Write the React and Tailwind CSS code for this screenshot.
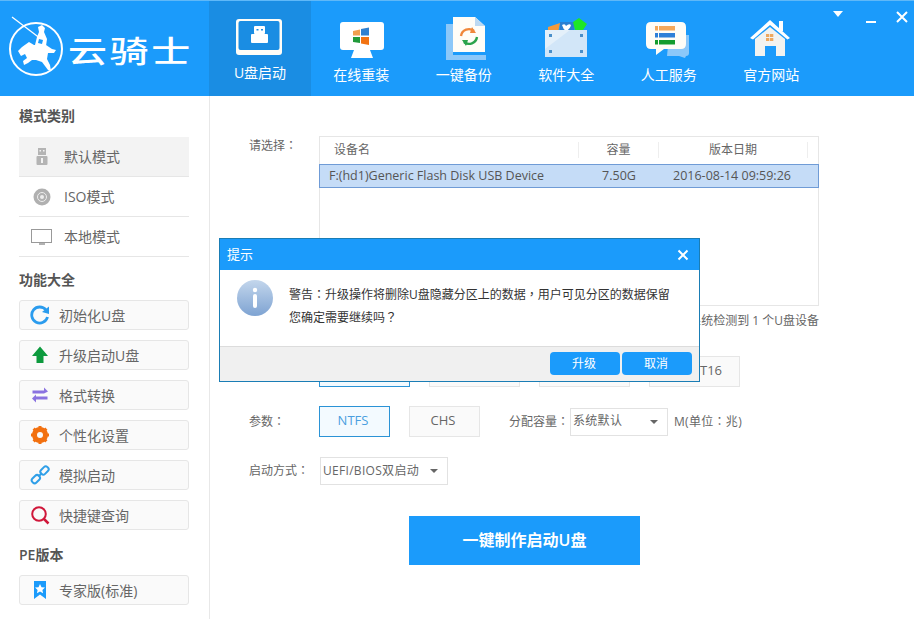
const Logo = () => (
  <svg width="58" height="64" viewBox="0 0 58 64" className="shrink-0">
    <circle cx="28" cy="36" r="26" fill="none" stroke="#fff" strokeWidth="2" />
    <path d="M4 4 L33 26" stroke="#fff" strokeWidth="1.300" />
    <path d="M30 14 L34 12 L37 15 L36 19 L39 26 L38 33 L27 32 L29 24 L31 19 Z" fill="#fff" />
    <path d="M10 38 L14 34 L21 29 L26 32 L38 32 L44 36 L48 37 L46 40 L40 40 L39 46 L42 52 L43 58 L40 57 L34 49 L28 47 L24 47 L20 50 L16 52 L15 48 L19 45 L17 41 L13 43 Z" fill="#fff" />
    <path d="M31 26 L35 27 L34 31 L30 30 Z" fill="#1b9bfb" />
  </svg>
);

const NAV = [
  {
    label: "U盘启动",
    icon: (
      <>
        <rect x="6" y="2" width="46" height="36" rx="3" fill="#fffdf7" />
        <rect x="8.500" y="4" width="41" height="29" rx="2" fill="#1a8de3" />
        <rect x="24" y="9" width="11" height="8" rx="1" fill="#fff" />
        <rect x="21" y="17" width="17" height="9" rx="1" fill="#fff" />
        <rect x="26.500" y="12" width="2" height="1.500" fill="#1a8de3" />
        <rect x="31" y="12" width="2" height="1.500" fill="#1a8de3" />
      </>
    ),
  },
  {
    label: "在线重装",
    icon: (
      <>
        <rect x="9" y="5" width="44" height="28" rx="3" fill="#fff" />
        <path d="M23 33 h16 l3 8 h-22 z" fill="#fff" />
        <path d="M22 14 l7 -1.500 v6 h-7 z" fill="#f0a050" />
        <path d="M30 12 l8 -1.500 v8 h-8 z" fill="#2f80d0" />
        <path d="M22 20 h7 v6 l-7 -1 z" fill="#219a3a" />
        <path d="M30 20 h8 v8 l-8 -1.500 z" fill="#f27212" />
      </>
    ),
  },
  {
    label: "一键备份",
    icon: (
      <>
        <path d="M12 7 h7 v31 h33 v5 h-40 z" fill="#8cc8f9" />
        <path d="M19 0 h22 l10 9 v26 h-32 z" fill="#fffdf7" />
        <path d="M41 0 l10 9 h-10 z" fill="#bcd9f2" />
        <path d="M27 19 a8 8 0 0 1 13 -5" fill="none" stroke="#f0873a" strokeWidth="2.400" />
        <path d="M38 10 l4 6 l-6 0 z" fill="#f0873a" />
        <path d="M43 20 a8 8 0 0 1 -13 5" fill="none" stroke="#2ba34a" strokeWidth="2.400" />
        <path d="M32 29 l-4 -6 l6 0 z" fill="#2ba34a" />
      </>
    ),
  },
  {
    label: "软件大全",
    icon: (
      <>
        <path d="M12 10 L24 6 L22 16 L12 16 Z" fill="#f39a3c" />
        <path d="M24 5 H38 V14 H24 Z" fill="#2a7fd1" />
        <path d="M37 5 L43 1 L51 7 L47 13 L39 13 Z" fill="#1ee626" />
        <path d="M26 8 Q29 6 30 9 Q33 6 35 8 Q34 12 30 14 Q27 12 26 8 Z" fill="#fff" />
        <rect x="9" y="13" width="42" height="27" fill="#e4f0fa" />
        <path d="M9 32 L34 13 H51 V40 H9 Z" fill="#d2e6f8" />
        <rect x="13" y="17" width="3" height="3" fill="#4a8fc9" />
        <rect x="44" y="17" width="3" height="3" fill="#4a8fc9" />
        <rect x="13" y="33" width="3" height="3" fill="#4a8fc9" />
        <rect x="44" y="33" width="3" height="3" fill="#4a8fc9" />
      </>
    ),
  },
  {
    label: "人工服务",
    icon: (
      <>
        <path d="M30 18 h20 v18 q0 3 -3 3 l-1 2 l-6 -2 h-12 z" fill="#8cc8f9" />
        <path d="M12 5 h30 q5 0 5 5 v17 q0 5 -5 5 h-17 l-8 6 v-6 h-5 q-5 0 -5 -5 v-17 q0 -5 5 -5 z" fill="#fffdf7" />
        <rect x="16" y="9" width="20" height="4.500" fill="#f5a85a" />
        <rect x="16" y="16" width="20" height="4.500" fill="#2f80d8" />
        <rect x="16" y="23" width="20" height="4.500" fill="#139c2e" />
        <rect x="19" y="9" width="1" height="19" fill="#fffdf7" />
      </>
    ),
  },
  {
    label: "官方网站",
    icon: (
      <>
        <rect x="38" y="4" width="4" height="10" fill="#fff" />
        <path d="M9 21 L29 3 L49 21 L46.500 22.500 L29 8 L12 22.500 Z" fill="#fff" />
        <path d="M14 22 L29 10 L44 22 V39 H14 Z" fill="#f2f3f0" />
        <rect x="24" y="29" width="11" height="10" fill="#1b9bfb" />
        <rect x="25" y="17" width="3.300" height="3" fill="#eda85f" />
        <rect x="29" y="17" width="3.300" height="3" fill="#eda85f" />
        <rect x="25" y="21" width="3.300" height="3" fill="#eda85f" />
        <rect x="29" y="21" width="3.300" height="3" fill="#eda85f" />
      </>
    ),
  },
];

const MODES = [
  {
    label: "默认模式",
    active: true,
    icon: (
      <>
        <rect x="6" y="1" width="8" height="7" fill="#b4b4b4" />
        <rect x="7.500" y="3" width="1.500" height="1.500" fill="#f3f3f3" />
        <rect x="11" y="3" width="1.500" height="1.500" fill="#f3f3f3" />
        <rect x="4.500" y="9" width="11" height="9" rx="1" fill="#b4b4b4" />
        <rect x="9" y="11" width="2" height="5" fill="#f3f3f3" />
      </>
    ),
  },
  {
    label: "ISO模式",
    icon: (
      <>
        <circle cx="10" cy="10" r="8.500" fill="#b0b0b0" />
        <circle cx="10" cy="10" r="4.500" fill="none" stroke="#ededed" strokeWidth="1" />
        <circle cx="10" cy="10" r="2" fill="#ededed" />
      </>
    ),
  },
  {
    label: "本地模式",
    icon: (
      <>
        <rect x="-0.500" y="2.500" width="20" height="13" fill="none" stroke="#999" />
        <path d="M7 17 h6" stroke="#999" strokeWidth="1.500" />
      </>
    ),
  },
];

const TOOLS = [
  {
    label: "初始化U盘",
    icon: (
      <>
        <path d="M16 5 A8 8 0 1 0 17.500 12" fill="none" stroke="#2b9cee" strokeWidth="2.800" />
        <path d="M12 7 L19 1.500 V9 Z" fill="#2b9cee" />
      </>
    ),
  },
  { label: "升级启动U盘", icon: <path d="M10 1.500 L18 11 H13.500 V18 H6.500 V11 H2 Z" fill="#0d9a3e" /> },
  {
    label: "格式转换",
    icon: (
      <>
        <path d="M2.500 5.500 H14 V2.500 L18 6.500 L14 8.500 H2.500 Z" fill="#8a72e0" />
        <path d="M17.500 11.500 H6 V9.500 L2 13.500 L6 17.500 V14.500 H17.500 Z" fill="#8a72e0" />
      </>
    ),
  },
  {
    label: "个性化设置",
    icon: (
      <>
        <circle cx="10" cy="10" r="6" fill="none" stroke="#f2700f" strokeWidth="4" />
        <path d="M10 1 V19 M1 10 H19 M3.600 3.600 L16.400 16.400 M16.400 3.600 L3.600 16.400" stroke="#f2700f" strokeWidth="3" />
        <circle cx="10" cy="10" r="3" fill="#fafafa" />
      </>
    ),
  },
  {
    label: "模拟启动",
    icon: (
      <>
        <path d="M8.500 11.500 L12 8" stroke="#2f9fe8" strokeWidth="2" />
        <rect x="-4" y="-2.800" width="9" height="5.600" rx="2.500" transform="translate(5.500 14.500) rotate(-45)" fill="none" stroke="#2f9fe8" strokeWidth="2" />
        <rect x="-4.500" y="-2.800" width="9" height="5.600" rx="2.500" transform="translate(14.500 5.500) rotate(-45)" fill="none" stroke="#2f9fe8" strokeWidth="2" />
      </>
    ),
  },
  {
    label: "快捷键查询",
    icon: (
      <>
        <circle cx="9" cy="9" r="6.800" fill="none" stroke="#d0173a" strokeWidth="2" />
        <path d="M13.500 13.500 L18.500 18.500" stroke="#d0173a" strokeWidth="2.500" />
      </>
    ),
  },
];

// centred full-width punctuation, as the original font draws it
const Mark = ({ children }) => <span className="font-['Noto_Sans_CJK_TC']">{children}</span>;

const SectionTitle = ({ children, className }) => (
  <h2 className={`h-5 text-sm leading-5 font-semibold text-[#555] ${className}`}>{children}</h2>
);

const ToolButton = ({ icon, label }) => (
  <div className="flex h-[30px] items-center rounded-[3px] border border-[#e6e6e6] bg-[#fafafa] pl-[10px] text-sm text-[#666]">
    <svg width="20" height="20" viewBox="0 0 20 20" className="shrink-0">{icon}</svg>
    <span className="mt-[1px] ml-[9px]">{label}</span>
  </div>
);

const Option = ({ active, className, children }) => (
  <div
    className={`flex h-[31px] items-center justify-center border pr-[3px] pb-[1px] text-[13px] ${
      active ? "border-[#2b93d6] bg-[#f3faff] text-[#4a9fe0]" : "border-[#e6e6e6] bg-[#fafafa] text-[#666]"
    } ${className}`}
  >
    {children}
  </div>
);

const Select = ({ className, text }) => (
  <div className={`flex h-[28px] items-center justify-between border border-[#e2e2e2] pr-2 pl-[2px] text-xs text-[#666] ${className}`}>
    <span className="mb-[1px] tracking-[0.3px]">{text}</span>
    <span className="mr-[1px] h-0 w-0 border-x-[4px] border-t-[4px] border-x-transparent border-t-[#666]" />
  </div>
);

export default function App() {
  return (
    <div
      className="relative h-[619px] w-[914px] overflow-hidden bg-white"
      style={{ fontFamily: '"Open Sans", "Noto Sans CJK SC", sans-serif' }}
    >
      <header className="flex h-24 border-t border-[#5fb8f8] bg-[#1b9bfb]">
        <div className="flex w-[209px] shrink-0 items-start pt-[12px] pl-[8px]">
          <Logo />
          <span className="mt-[18px] ml-[2px] origin-left scale-x-[1.3] text-[30px] leading-10 font-medium tracking-[2px] whitespace-nowrap text-white">
            云骑士
          </span>
        </div>
        <nav className="flex">
          {NAV.map((item, i) => (
            <div
              key={item.label}
              className={`flex flex-col items-center pt-[16px] text-sm text-white ${i === 0 ? "w-[102px] bg-[#1a8de3]" : "w-[102.500px] pr-[2px]"}`}
            >
              <svg width="60" height="44" viewBox="0 0 60 44">{item.icon}</svg>
              <span className={`leading-5 ${i === 0 ? "mt-[2px]" : "mt-[4px]"}`}>{item.label}</span>
            </div>
          ))}
        </nav>
        <div className="absolute top-[10px] right-[6px] flex items-center">
          <span className="mt-[-6px] h-0 w-0 border-x-[5px] border-t-[6px] border-x-transparent border-t-white" />
          <span className="mt-[10px] ml-[23px] h-[2px] w-[10px] bg-white" />
          <svg width="12" height="12" viewBox="0 0 12 12" className="mt-[1px] ml-[20px]">
            <path d="M1 1 L11 11 M11 1 L1 11" stroke="#fff" strokeWidth="2" />
          </svg>
        </div>
      </header>

      <div className="flex h-[523px]">
        <aside className="w-[210px] shrink-0 border-r border-[#e8e8e8] pt-[10px] pr-[20px] pl-[19px]">
          <SectionTitle>模式类别</SectionTitle>
          <div className="mt-[11px]">
            {MODES.map((mode) => (
              <div
                key={mode.label}
                className={`flex h-10 items-center border-b border-[#e6e6e6] pl-[13px] text-sm text-[#666] ${mode.active ? "bg-[#f3f3f3]" : ""}`}
              >
                <svg width="20" height="20" viewBox="0 0 20 20" className="shrink-0 overflow-visible">{mode.icon}</svg>
                <span className="ml-[12px]">{mode.label}</span>
              </div>
            ))}
          </div>
          <SectionTitle className="mt-[13px]">功能大全</SectionTitle>
          <div className="mt-[10px] flex flex-col gap-[10px]">
            {TOOLS.map((tool) => (
              <ToolButton key={tool.label} {...tool} />
            ))}
          </div>
          <SectionTitle className="mt-[15px]">PE版本</SectionTitle>
          <div className="mt-[10px]">
            <ToolButton
              label="专家版(标准)"
              icon={
                <>
                  <path d="M4 1 H16 V19 L10 14.500 L4 19 Z" fill="#1b9bfb" />
                  <path d="M10 4 L11.500 7.200 L15 7.600 L12.400 9.900 L13.100 13.300 L10 11.600 L6.900 13.300 L7.600 9.900 L5 7.600 L8.500 7.200 Z" fill="#fff" />
                </>
              }
            />
          </div>
        </aside>

        <main className="flex-1 pt-[40px] pl-[39px] text-xs text-[#666]">
          <div className="flex">
            <span className="w-[70px] pt-[1px] leading-4">请选择<Mark>：</Mark></span>
            <div className="h-[170px] w-[500px] border border-[#e6e6e6]">
              <div className="flex h-[27px] items-center pb-[1px] text-center">
                <span className="w-[258px] pl-[14px] text-left">设备名</span>
                <span className="w-[80px] border-l border-[#eee]">容量</span>
                <span className="w-[150px] border-x border-[#eee]">版本日期</span>
              </div>
              <div className="-mx-px flex h-[24px] items-center border border-[#6f9bd6] bg-[#c5dcf7] text-center text-[12.500px] text-[#555]">
                <span className="w-[259px] pl-[9px] text-left">F:(hd1)Generic Flash Disk USB Device</span>
                <span className="w-[80px]">7.50G</span>
                <span className="w-[146px]">2016-08-14 09:59:26</span>
              </div>
            </div>
          </div>
          <p className="mt-[6px] w-[570px] text-right leading-[18px]">系统检测到 1 个U盘设备</p>

          <div className="mt-[26px] flex gap-[19px] pl-[70px]">
            <Option active className="w-[91px]" />
            <Option className="w-[91px]" />
            <Option className="w-[91px]" />
            <Option className="w-[91px] justify-end pr-[17px]">T16</Option>
          </div>

          <div className="mt-[19px] flex items-center">
            <span className="mb-[1px] w-[70px]">参数<Mark>：</Mark></span>
            <Option active className="w-[71px]">NTFS</Option>
            <Option className="ml-[19px] w-[71px]">CHS</Option>
            <span className="mb-[1px] ml-[29px] w-[61px]">分配容量<Mark>：</Mark></span>
            <Select className="w-[98px]" text="系统默认" />
            <span className="mb-[1px] ml-[6px] tracking-[0.3px]">M(单位<Mark>：</Mark>兆)</span>
          </div>

          <div className="mt-[20px] flex items-center">
            <span className="mb-[1px] w-[71px]">启动方式<Mark>：</Mark></span>
            <Select className="w-[128px]" text="UEFI/BIOS双启动" />
          </div>

          <button className="mt-[31px] ml-[160px] flex h-[49px] w-[231px] items-center justify-center bg-[#1b9bfb] pb-[2px] text-base font-semibold text-white">
            一键制作启动U盘
          </button>
        </main>
      </div>

      <div className="absolute top-[238px] left-[219px] flex h-[144px] w-[481px] flex-col border border-[#1a7db5] bg-white">
        <div className="flex h-[31px] items-center justify-between bg-[#1b9bfb] pr-[10px] pl-[7px] text-[13px] text-white">
          <span>提示</span>
          <svg width="12" height="12" viewBox="0 0 12 12">
            <path d="M1.500 1.500 L10.500 10.500 M10.500 1.500 L1.500 10.500" stroke="#fff" strokeWidth="2" />
          </svg>
        </div>
        <div className="flex h-[76px] pt-[10px] pl-[17px]">
          <svg width="36" height="36" viewBox="0 0 36 36" className="shrink-0">
            <defs>
              <linearGradient id="info" x1="0" y1="0" x2="0" y2="1">
                <stop offset="0" stopColor="#c3d6ec" />
                <stop offset="1" stopColor="#7ea3d2" />
              </linearGradient>
            </defs>
            <circle cx="18" cy="18" r="18" fill="url(#info)" />
            <circle cx="18" cy="10" r="2.200" fill="#fff" />
            <rect x="16" y="14" width="4" height="14" rx="2" fill="#fff" />
          </svg>
          <p className="ml-[16px] pt-[3px] text-xs leading-[22px] text-[#333]">
            警告<Mark>：</Mark>升级操作将删除U盘隐藏分区上的数据<Mark>，</Mark>用户可见分区的数据保留
            <br />
            您确定需要继续吗<Mark>？</Mark>
          </p>
        </div>
        <div className="flex flex-1 items-start justify-end gap-[2px] border-t border-[#dcdcdc] bg-[#f0f0f0] pt-[5px] pr-[7px]">
          <button className="h-[23px] w-[70px] rounded-[4px] bg-[#1b9bfb] pr-[2px] text-xs text-white">升级</button>
          <button className="h-[23px] w-[70px] rounded-[4px] bg-[#1b9bfb] pr-[2px] text-xs text-white">取消</button>
        </div>
      </div>
    </div>
  );
}
